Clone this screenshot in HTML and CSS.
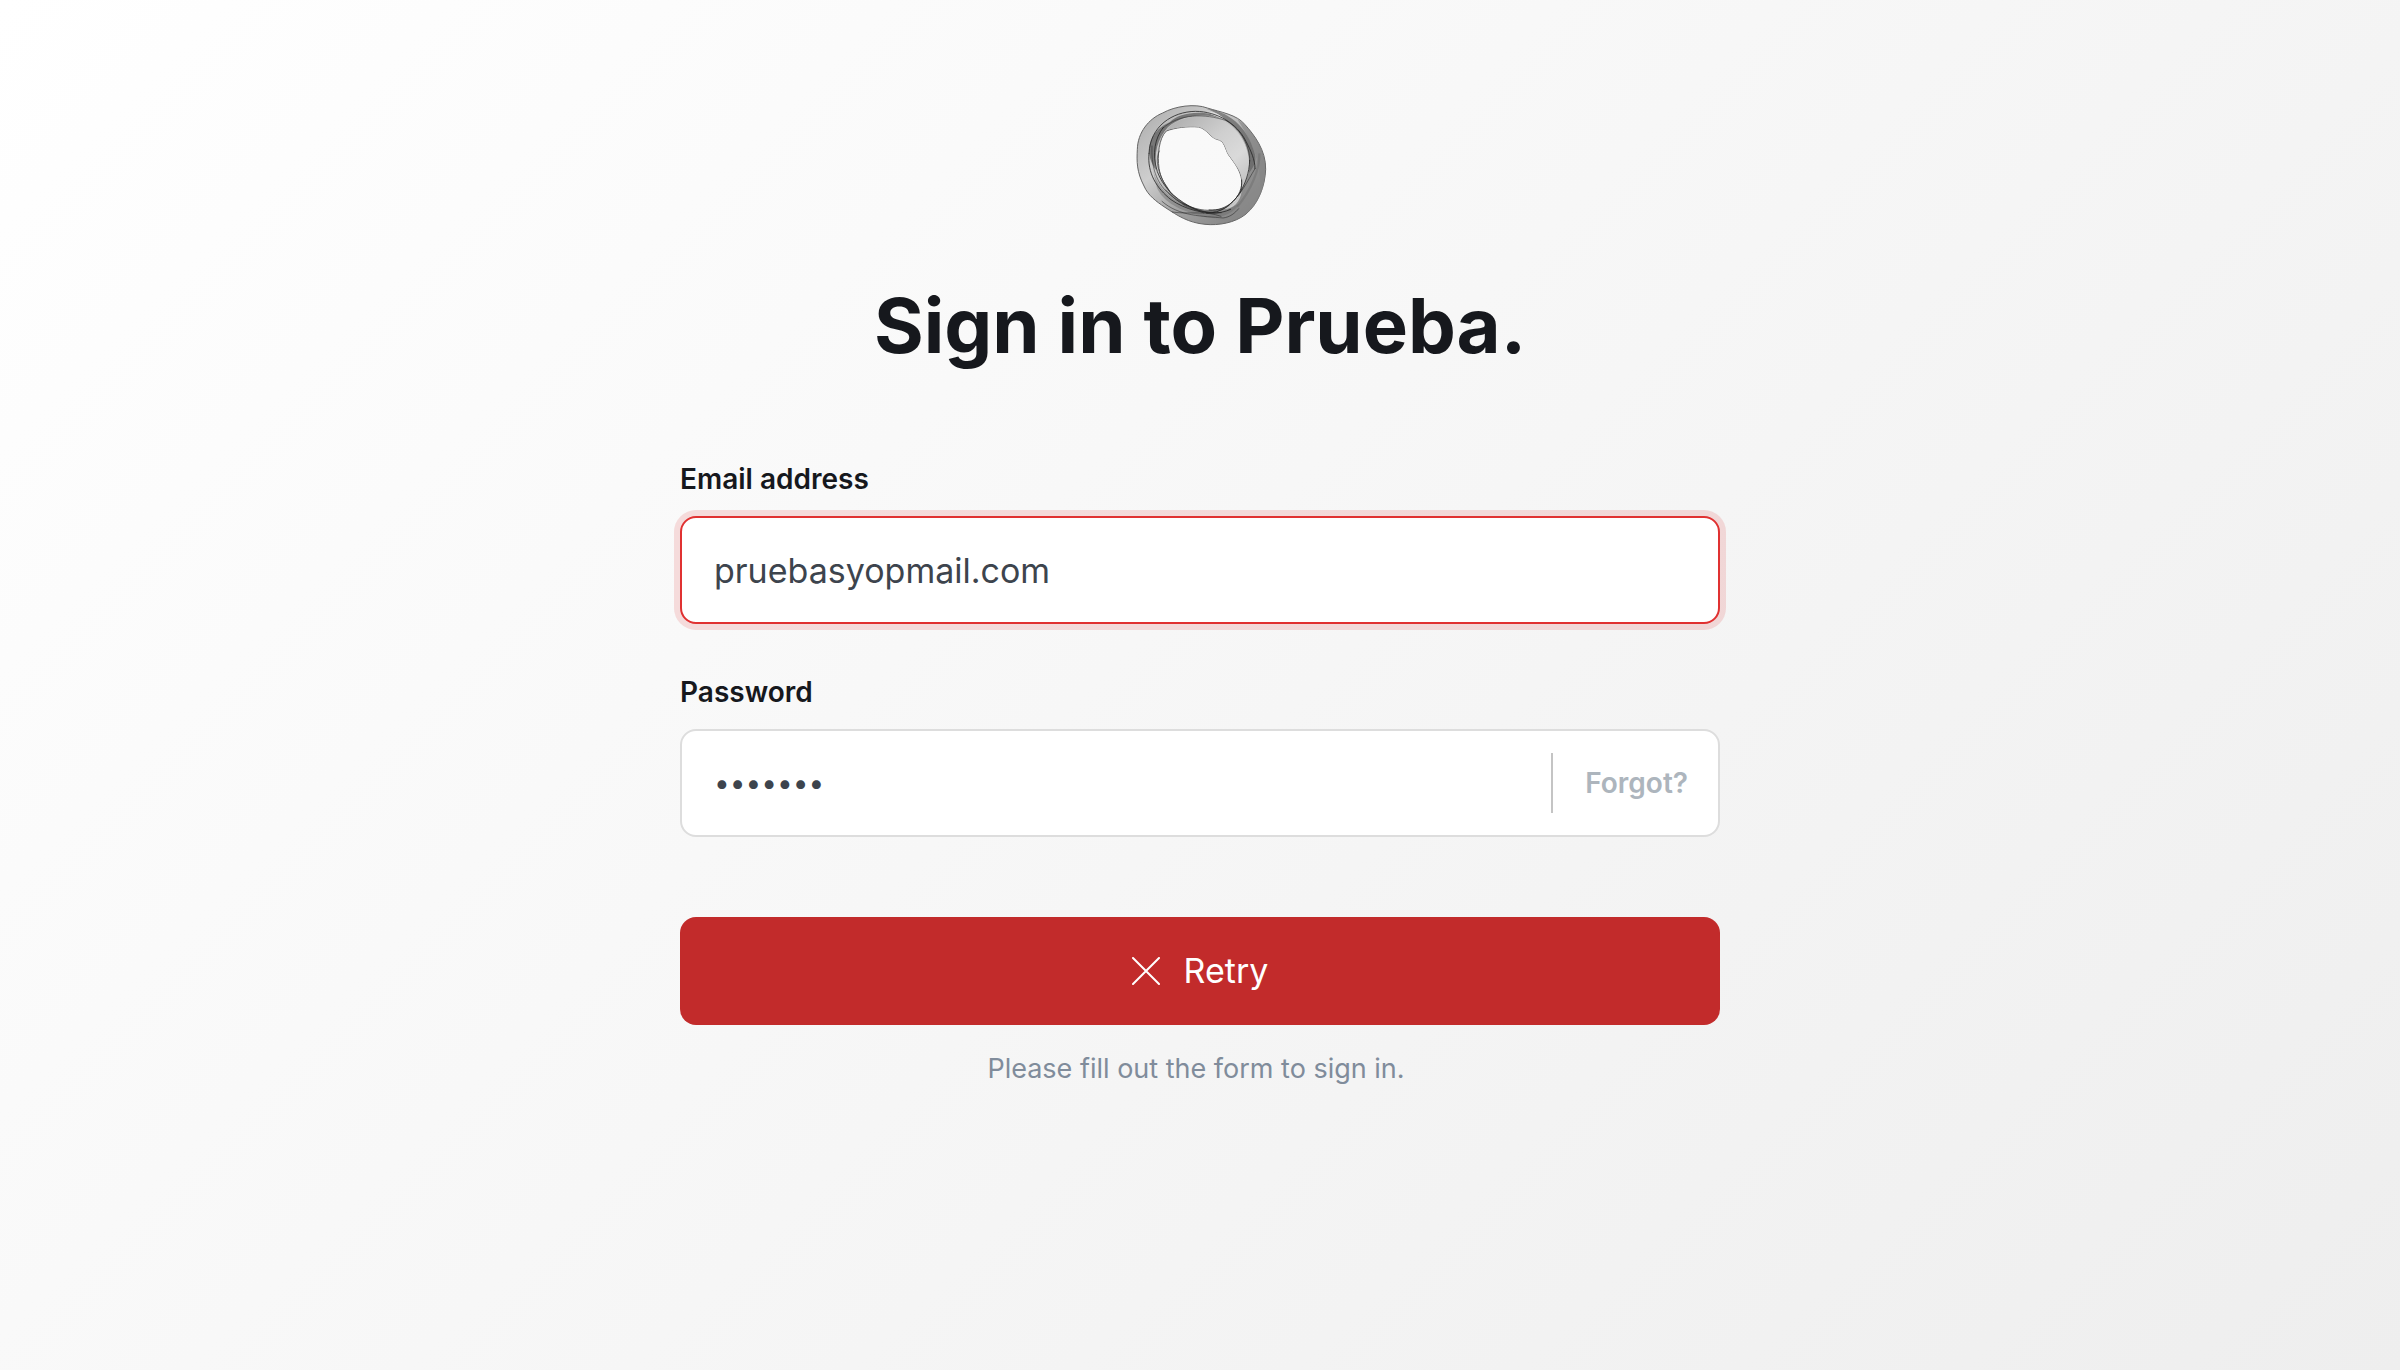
FILE: index.html
```html
<!DOCTYPE html>
<html lang="en">
<head>
<meta charset="utf-8">
<meta name="viewport" content="width=device-width, initial-scale=1">
<title>Sign in to Prueba.</title>
<link rel="stylesheet" href="styles.css">
</head>
<body>
<main class="page">
  <svg class="logo" viewBox="0 0 480 450" aria-hidden="true">
    <defs>
      <linearGradient id="band" x1="0" y1="0" x2="1" y2="1">
        <stop offset="0" stop-color="#aaa"/>
        <stop offset=".35" stop-color="#cecece"/>
        <stop offset=".6" stop-color="#a2a2a2"/>
        <stop offset="1" stop-color="#787878"/>
      </linearGradient>
      <linearGradient id="fold" x1="0" y1="0" x2="1" y2="1">
        <stop offset="0" stop-color="#aaa"/>
        <stop offset=".45" stop-color="#cfcfcf"/>
        <stop offset=".7" stop-color="#dadada"/>
        <stop offset="1" stop-color="#bbb"/>
      </linearGradient>
    </defs>
    <path fill="url(#band)" fill-rule="evenodd" stroke="#666" stroke-width="3" d="M128 69C165 48 225 40 262 54C300 66 352 74 375 104C402 134 438 180 437 238C435 290 414 342 378 372C345 399 295 407 255 403C205 398 174 378 135 352C108 334 84 316 72 288C50 246 50 214 52 178C53 128 86 86 128 69ZM139 123C165 113 203 108 236 111C262 118 268 140 290 148C315 151 315 178 326 195C344 220 361 240 365 270C368 300 359 329 332 346C307 362 270 363 243 359C202 352 158 328 144 295C130 275 122 263 117 235C112 198 116 145 139 123Z"/>
    <path fill="url(#fold)" d="M139 120C175 75 270 66 320 98C370 128 392 190 387 238C385 262 376 281 366 298C369 253 358 239 326 195C315 178 315 151 290 148C268 140 262 118 236 111C203 108 165 113 139 120Z"/>
    <path fill="#555" fill-opacity=".62" d="M258 56C320 62 382 106 404 190C411 213 402 231 387 250C397 185 370 121 319 94C300 74 283 64 258 56Z"/>
    <path fill="#777" fill-opacity=".5" d="M375 104C402 134 438 180 437 238C435 262 430 285 420 308C424 240 412 180 352 88Z"/>
    <path fill="#888" fill-opacity=".55" d="M387 248C402 230 420 202 416 165C455 239 432 332 378 372C345 398 300 397 266 378C319 378 355 343 366 298Z"/>
    <path fill="none" stroke="#666" stroke-opacity=".4" stroke-width="7" d="M418 190C420 240 390 305 352 350"/>
    <path fill="#444" fill-opacity=".6" d="M150 96C178 65 266 55 320 92C263 67 189 72 144 111C112 146 102 190 108 240C94 222 79 190 93 151C104 124 126 106 150 96Z"/>
    <path fill="#666" fill-opacity=".4" d="M96 229C108 282 138 322 201 349C242 372 284 374 322 359L360 340C335 379 284 391 239 377C181 360 132 339 111 294Z"/>
    <path fill="#e0e0e0" d="M257 66C278 62 304 74 319 93C301 83 278 76 257 66Z"/>
    <path fill="#ddd" fill-opacity=".75" d="M309 357C328 352 350 330 365 304C361 338 338 359 309 357Z"/>
    <g fill="none" stroke="#262626" stroke-width="2" stroke-opacity=".82" stroke-linecap="round">
      <path stroke-width="3" d="M87 190C90 108 158 65 226 64C291 64 352 101 378 154C393 183 405 209 405 236"/>
      <path stroke-width="3" d="M87 190C81 250 111 296 153 329C196 359 252 373 304 368"/>
      <path d="M96 168C94 221 102 282 163 325C196 350 239 364 282 369"/>
      <path stroke-width="3" d="M130 112C105 144 95 190 112 245C129 290 161 322 207 348C254 374 297 374 332 358"/>
      <path d="M127 116C177 70 254 70 319 92C365 121 390 169 389 213"/>
      <path d="M118 183C106 204 110 243 141 294C158 322 201 350 251 369"/>
      <path stroke-width="3" d="M389 211C388 249 376 281 358 311C336 345 301 370 260 370"/>
      <path d="M405 236C380 277 362 318 321 350C291 374 233 370 188 343"/>
      <path d="M126 334C177 380 249 378 309 384C331 381 344 370 356 356"/>
      <path d="M157 366C206 374 257 361 303 379"/>
      <path d="M137 300C156 315 166 335 198 345"/>
      <path stroke-width="3" d="M365 270C370 319 322 365 267 360"/>
    </g>
  </svg>
  <h1 class="title">Sign in to Prueba.</h1>
  <form class="form" novalidate>
    <div class="field">
      <label class="label" for="email">Email address</label>
      <input class="input input-error" id="email" type="email" value="pruebasyopmail.com" aria-invalid="true">
    </div>
    <div class="field">
      <label class="label" for="password">Password</label>
      <div class="input input-group">
        <input class="password" id="password" type="password" value="prueba1">
        <a class="forgot" href="#">Forgot?</a>
      </div>
    </div>
    <button class="retry" type="submit">
      <svg class="cross" viewBox="0 0 28 28" aria-hidden="true"><path d="M1 1L27 27M27 1L1 27"/></svg>
      Retry
    </button>
    <p class="hint">Please fill out the form to sign in.</p>
  </form>
</main>
</body>
</html>
```
FILE: styles.css
```css
* { box-sizing: border-box; }

body {
  margin: 0;
  min-height: 100vh;
  font-family: Inter, "Liberation Sans", sans-serif;
  color: #16181d;
  background: linear-gradient(135deg, #fff, #eee);
}

.page {
  display: flex;
  flex-direction: column;
  align-items: center;
  padding: 90px 24px;
}

.logo { width: 160px; height: 150px; }

.title {
  margin: 45px 0 93px;
  font-size: 76px;
  line-height: 80px;
  font-weight: 700;
  text-align: center;
}

.form {
  display: flex;
  flex-direction: column;
  width: 100%;
  max-width: 1040px;
}

.field {
  display: flex;
  flex-direction: column;
  gap: 16px;
  margin-bottom: 47px;
}

.label {
  font-size: 28px;
  line-height: 42px;
  font-weight: 600;
}

.input {
  width: 100%;
  height: 108px;
  padding: 0 32px;
  border: 2px solid #ddd;
  border-radius: 16px;
  background: #fff;
  font: 400 34px/44px Inter, "Liberation Sans", sans-serif;
  color: #3d444d;
  outline: none;
}

.input-error {
  border-color: #e03131;
  box-shadow: 0 0 0 6px rgba(224, 49, 49, .15);
}

.input-group {
  display: flex;
  align-items: center;
  padding-right: 30px;
}

.password {
  flex: 1;
  min-width: 0;
  padding: 0;
  border: 0;
  background: none;
  font: inherit;
  font-size: 28px;
  color: inherit;
  outline: none;
}

.forgot {
  padding-left: 32px;
  border-left: 2px solid #c4c4c4;
  font-size: 28px;
  line-height: 60px;
  font-weight: 600;
  color: #adb5bd;
  text-decoration: none;
}

.retry {
  display: flex;
  align-items: center;
  justify-content: center;
  gap: 24px;
  height: 108px;
  margin-top: 33px;
  border: 0;
  border-radius: 16px;
  background: #c22b2b;
  font: 400 34px/44px Inter, "Liberation Sans", sans-serif;
  color: #fff;
}

.cross {
  width: 28px;
  height: 28px;
  fill: none;
  stroke: #fff;
  stroke-width: 2;
  stroke-linecap: round;
}

.hint {
  margin: 24px 0 0;
  padding-right: 8px;
  font-size: 27px;
  line-height: 40px;
  text-align: center;
  color: #808c9b;
}
```
